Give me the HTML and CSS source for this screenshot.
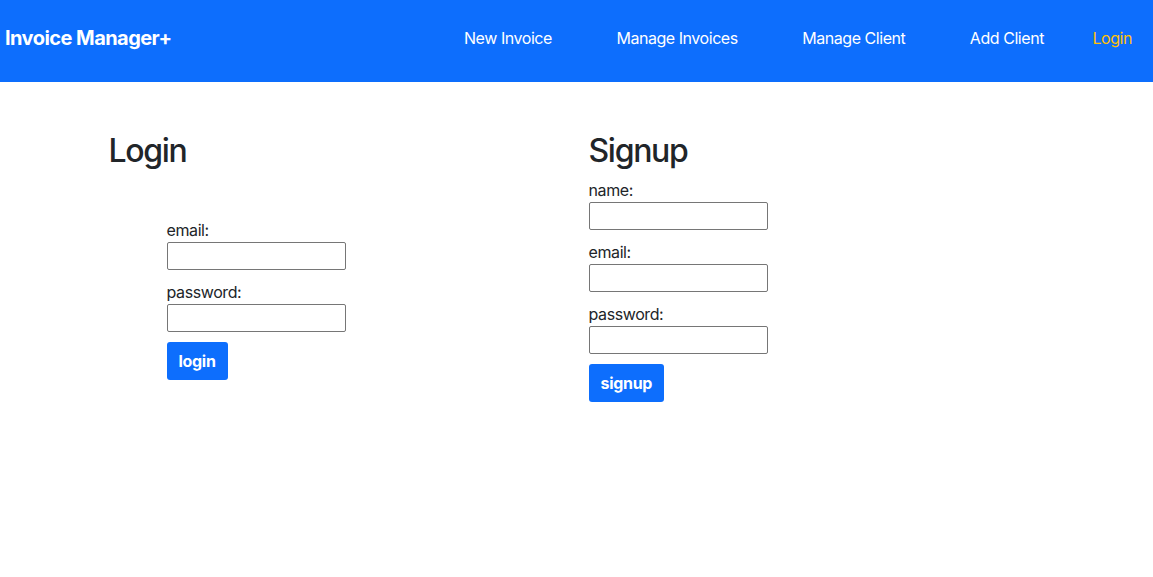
FILE: index.html
```html
<!DOCTYPE html>
<html lang="en">
<head>
<meta charset="utf-8">
<title>Invoice Manager+</title>
<link rel="stylesheet" href="styles.css">
</head>
<body>
<nav class="navbar">
  <a class="brand" href="#">Invoice Manager+</a>
  <ul class="nav-links">
    <li><a href="#">New Invoice</a></li>
    <li><a href="#">Manage Invoices</a></li>
    <li><a href="#">Manage Client</a></li>
    <li><a href="#">Add Client</a></li>
    <li class="active"><a href="#">Login</a></li>
  </ul>
</nav>
<main class="container">
  <section class="col">
    <h2>Login</h2>
    <form class="form form-login">
      <label>email:</label>
      <input type="text">
      <label>password:</label>
      <input type="password">
      <button type="button" class="btn">login</button>
    </form>
  </section>
  <section class="col">
    <h2>Signup</h2>
    <form class="form">
      <label>name:</label>
      <input type="text">
      <label>email:</label>
      <input type="text">
      <label>password:</label>
      <input type="password">
      <button type="button" class="btn">signup</button>
    </form>
  </section>
</main>
</body>
</html>
```
FILE: styles.css
```css
* { box-sizing: border-box; }
body {
  margin: 0;
  font-family: Inter, "Noto Sans", sans-serif;
  font-size: 16px;
  line-height: 1.5;
  color: #212529;
  background: #fff;
}
.navbar {
  display: flex;
  align-items: flex-start;
  height: 82px;
  background: #0d6efd;
  padding: 0 21px 0 5px;
}
.brand {
  color: #fff;
  font-weight: 700;
  font-size: 20px;
  line-height: 30px;
  text-decoration: none;
  margin-top: 23px;
  letter-spacing: -0.55px;
}
.nav-links {
  list-style: none;
  margin: 26px 0 0 auto;
  padding: 0;
  display: flex;
  gap: 64.5px;
}
.nav-links a {
  color: #fff;
  text-decoration: none;
  line-height: 24px;
  letter-spacing: -0.45px;
}
.nav-links .active { margin-left: -16px; }
.nav-links .active a { color: #ffc107; }
.container {
  width: 960px;
  margin: 0 auto;
  padding-top: 50px;
  display: flex;
}
.col {
  width: 480px;
  padding: 0 12px;
}
h2 {
  margin: 0 0 8px;
  font-size: 32px;
  font-weight: 500;
  line-height: 1.2;
  letter-spacing: -1.3px;
}
.form {
  display: flex;
  flex-direction: column;
  align-items: flex-start;
}
.form-login {
  margin: 48px 0 0 58px;
}
label {
  line-height: 24px;
  letter-spacing: -0.4px;
}
input {
  width: 179px;
  height: 28px;
  border: 1px solid #767676;
  border-radius: 2px;
  margin: 0 0 10px;
  padding: 2px 4px;
  font: inherit;
}
.btn {
  background: #0d6efd;
  color: #fff;
  border: none;
  border-radius: 3px;
  padding: 7px 12px;
  font-family: inherit;
  font-size: 16px;
  font-weight: 700;
  line-height: 24px;
  letter-spacing: -0.3px;
}
```
